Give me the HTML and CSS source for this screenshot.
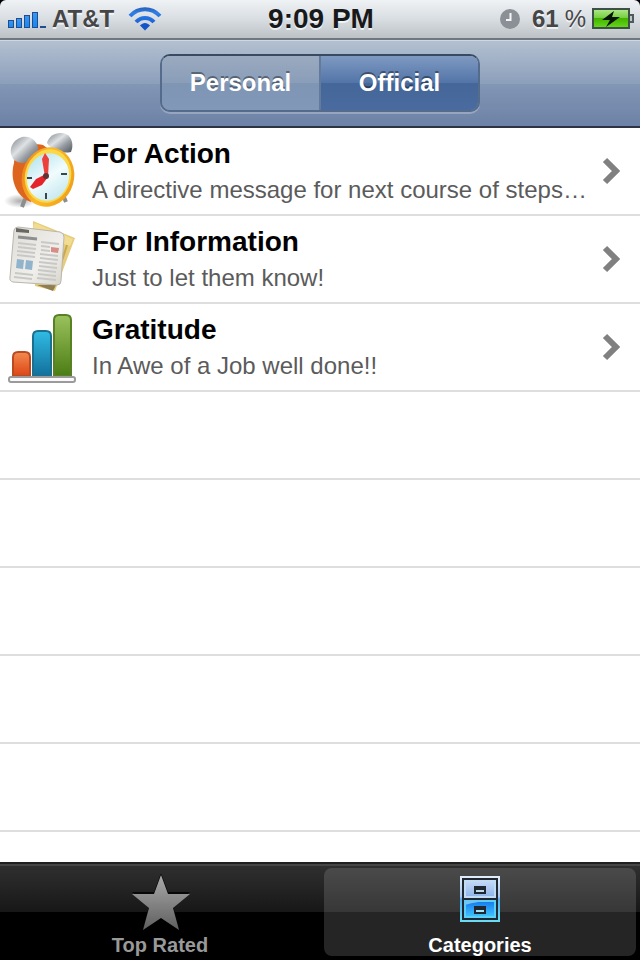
FILE: index.html
```html
<!DOCTYPE html>
<html lang="en">
  <head>
    <meta charset="UTF-8" />
    <meta name="viewport" content="width=device-width" />
    <title>Categories</title>
    <link rel="stylesheet" href="styles.css">
  </head>
  <body>
    <header class="status-bar">
      <div class="status-left">
        <svg class="signal" width="40" height="20" viewBox="0 0 40 20" aria-hidden="true">
          <defs>
            <linearGradient id="signalFill" x1="0" y1="0" x2="0" y2="1">
              <stop offset="0" stop-color="#3a97ee" />
              <stop offset="1" stop-color="#1487f5" />
            </linearGradient>
          </defs>
          <g fill="url(#signalFill)" stroke="#234c8e" stroke-width="1">
            <rect x="0.5" y="10.5" width="5" height="7" />
            <rect x="8.5" y="8.5" width="5" height="9" />
            <rect x="16.5" y="5.5" width="5" height="12" />
            <rect x="24.5" y="2.5" width="5" height="15" />
          </g>
          <rect x="32" y="16" width="6" height="2" fill="#234c8e" />
        </svg>
        <span class="carrier">AT&amp;T</span>
        <svg class="wifi" width="34" height="26" viewBox="0 0 34 26" aria-hidden="true">
          <defs>
            <linearGradient id="wifiStroke" gradientUnits="userSpaceOnUse" x1="0" y1="1" x2="0" y2="24">
              <stop offset="0" stop-color="#285caf" />
              <stop offset="0.25" stop-color="#2d80e8" />
              <stop offset="1" stop-color="#104fc8" />
            </linearGradient>
          </defs>
          <g fill="none" stroke="url(#wifiStroke)" stroke-width="4">
            <path d="M2 10C10.5 1 23.5 1 32 10" />
            <path d="M8 16C13 10.5 21 10.5 26 16" />
          </g>
          <path d="M12 19.5C15 16 19 16 22 19.5L17 24.5Z" fill="#1453c9" />
        </svg>
      </div>
      <time class="clock">9:09 PM</time>
      <div class="status-right">
        <svg width="20" height="20" viewBox="0 0 20 20" aria-hidden="true">
          <circle cx="10" cy="10" r="10" fill="#8a9095" />
          <path d="M10.5 4V11H6" fill="none" stroke="#f3f5f6" stroke-width="2" />
        </svg>
        <span class="percent">61<span class="percent-sign">%</span></span>
        <svg class="battery" width="42" height="22" viewBox="0 0 42 22" aria-hidden="true">
          <defs>
            <linearGradient id="batteryFill" x1="0" y1="0" x2="0" y2="1">
              <stop offset="0" stop-color="#b2e88d" />
              <stop offset="0.45" stop-color="#78cf43" />
              <stop offset="0.5" stop-color="#43b300" />
              <stop offset="1" stop-color="#68d81e" />
            </linearGradient>
          </defs>
          <rect x="1" y="1" width="36" height="19" fill="url(#batteryFill)" stroke="#3c5145" stroke-width="2" />
          <path d="M38 7h3v7h-3" fill="#bdc6ca" stroke="#50595e" stroke-width="2" />
          <path d="M22 3L10 12L18 12L14 19L28 9L20 9Z" fill="#071303" />
        </svg>
      </div>
    </header>

    <nav class="nav-bar">
      <div class="segmented">
        <button type="button" class="segment" aria-pressed="false">Personal</button>
        <button type="button" class="segment active" aria-pressed="true">Official</button>
      </div>
    </nav>

    <main class="content">
      <ul class="list">
        <li>
          <a class="row" href="#action">
            <svg class="row-icon" width="76" height="80" viewBox="0 0 76 80" aria-hidden="true">
              <defs>
                <linearGradient id="bell" x1="0" y1="0" x2="1" y2="1">
                  <stop offset="0" stop-color="#7b8187" />
                  <stop offset="0.4" stop-color="#dfe2e4" />
                  <stop offset="0.65" stop-color="#969ca1" />
                  <stop offset="1" stop-color="#4f555c" />
                </linearGradient>
                <linearGradient id="clockRim" x1="0" y1="0" x2="1" y2="0">
                  <stop offset="0" stop-color="#f08a1c" />
                  <stop offset="0.4" stop-color="#fbb92a" />
                  <stop offset="1" stop-color="#f0a21c" />
                </linearGradient>
                <linearGradient id="clockFace" x1="0" y1="0" x2="1" y2="1">
                  <stop offset="0" stop-color="#a9dfec" />
                  <stop offset="0.5" stop-color="#f1fcfd" />
                  <stop offset="1" stop-color="#b9e2ec" />
                </linearGradient>
                <radialGradient id="clockShadow">
                  <stop offset="0" stop-color="#777" stop-opacity="0.6" />
                  <stop offset="1" stop-color="#777" stop-opacity="0" />
                </radialGradient>
              </defs>
              <ellipse cx="20" cy="70" rx="16" ry="7" fill="url(#clockShadow)" />
              <path d="M25 68L22 76M63 64L66 71" stroke="#8c8d8f" stroke-width="4" />
              <path d="M14 32C15 19 32 11 43 14L54 22L31 71C18 67 9 50 14 32Z" fill="#de651d" />
              <path d="M14 29C7 20 12 9 22 6C31 4 39 11 38 20C33 30 23 36 14 29Z" fill="url(#bell)" />
              <path d="M47 12C49 3 59 0 66 3C72 6 74 14 71 21C62 23 52 20 47 12Z" fill="url(#bell)" />
              <ellipse cx="48" cy="46" rx="26" ry="30" fill="url(#clockRim)" transform="rotate(16 48 46)" />
              <ellipse cx="48" cy="45" rx="23" ry="27" fill="#fbd847" transform="rotate(16 48 45)" />
              <ellipse cx="48" cy="46" rx="21" ry="24" fill="url(#clockFace)" transform="rotate(16 48 46)" />
              <path d="M27 47h5M61 43h6M46 62v6" stroke="#38464d" stroke-width="2" />
              <path d="M45 46L42 28L45 22L49 28L48 45Z" fill="#ee403b" />
              <path d="M46 43L36 48L30 56L33 58L42 54L48 46Z" fill="#e5242a" />
              <circle cx="46" cy="45" r="3" fill="#613235" />
            </svg>
            <span class="row-text">
              <span class="row-title">For Action</span>
              <span class="row-detail">A directive message for next course of steps…</span>
            </span>
            <svg class="chevron" width="18" height="28" viewBox="0 0 18 28" aria-hidden="true">
              <path d="M3 3L14 14L3 25" />
            </svg>
          </a>
        </li>
        <li>
          <a class="row" href="#information">
            <svg class="row-icon" width="76" height="80" viewBox="0 0 76 80" aria-hidden="true">
              <defs>
                <linearGradient id="paper" x1="0" y1="0" x2="1" y2="1">
                  <stop offset="0" stop-color="#dedcd6" />
                  <stop offset="0.6" stop-color="#f0efeb" />
                  <stop offset="1" stop-color="#d6d3ca" />
                </linearGradient>
              </defs>
              <path d="M33 2L75 19L55 72L35 67Z" fill="#e6cc7b" />
              <path d="M35 4L73 20L70 27L31 13Z" fill="#f1dc91" />
              <path d="M37 66L53 72L56 66Z" fill="#8e7e52" />
              <path d="M67 26L60 48" stroke="#c7a850" stroke-width="2" />
              <path d="M18 8L60 13Q64 14 64 18L61 62Q61 66 57 66L13 63Q9 62 10 58L14 11Q15 8 18 8Z" fill="url(#paper)" stroke="#b9b6ae" />
              <path d="M16 9L29 11V14L16 13Z" fill="#696761" />
              <path d="M18 18L37 20" stroke="#8d8e8e" stroke-width="3" />
              <path d="M41 23L59 25M41 27L50 28M41 31L50 32M40 35L58 37M40 39L58 41M39 43L57 45M39 47L57 49M38 51L56 53M38 55L56 57M37 59L56 61M18 24L36 26M18 28L36 30M17 32L35 34M17 36L35 38M15 54L33 56M14 58L32 60" stroke="#c8c9c7" stroke-width="2" />
              <path d="M51 28L59 29L58 34L51 33Z" fill="#d88c88" />
              <path d="M17 40L24 41L23 50L16 49ZM26 41L33 42L32 51L25 50Z" fill="#91b3cc" />
            </svg>
            <span class="row-text">
              <span class="row-title">For Information</span>
              <span class="row-detail">Just to let them know!</span>
            </span>
            <svg class="chevron" width="18" height="28" viewBox="0 0 18 28" aria-hidden="true">
              <path d="M3 3L14 14L3 25" />
            </svg>
          </a>
        </li>
        <li>
          <a class="row" href="#gratitude">
            <svg class="row-icon" width="76" height="80" viewBox="0 0 76 80" aria-hidden="true">
              <defs>
                <linearGradient id="barRed" x1="0" y1="0" x2="0" y2="1">
                  <stop offset="0" stop-color="#f38b4e" />
                  <stop offset="1" stop-color="#dd4516" />
                </linearGradient>
                <linearGradient id="barBlue" x1="0" y1="0" x2="0" y2="1">
                  <stop offset="0" stop-color="#30bce4" />
                  <stop offset="1" stop-color="#126f9b" />
                </linearGradient>
                <linearGradient id="barGreen" x1="0" y1="0" x2="0" y2="1">
                  <stop offset="0" stop-color="#9bc25d" />
                  <stop offset="1" stop-color="#4b7c14" />
                </linearGradient>
              </defs>
              <path d="M13 69V50Q13 45 18 45H25Q30 45 30 50V69Z" fill="url(#barRed)" stroke="#b94b22" stroke-width="2" />
              <path d="M33 69V29Q33 24 38 24H46Q51 24 51 29V69Z" fill="url(#barBlue)" stroke="#1b708f" stroke-width="2" />
              <path d="M54 69V13Q54 8 59 8H66Q71 8 71 13V69Z" fill="url(#barGreen)" stroke="#588126" stroke-width="2" />
              <rect x="9" y="70" width="66" height="5" rx="2" fill="#fafafa" stroke="#9b9b9b" stroke-width="2" />
            </svg>
            <span class="row-text">
              <span class="row-title">Gratitude</span>
              <span class="row-detail">In Awe of a Job well done!!</span>
            </span>
            <svg class="chevron" width="18" height="28" viewBox="0 0 18 28" aria-hidden="true">
              <path d="M3 3L14 14L3 25" />
            </svg>
          </a>
        </li>
      </ul>
      <div class="empty-rows"></div>
    </main>

    <nav class="tab-bar">
      <a class="tab" href="#top-rated">
        <svg class="tab-icon" width="60" height="58" viewBox="0 0 60 58" aria-hidden="true">
          <defs>
            <linearGradient id="starFill" x1="0" y1="0" x2="0" y2="1">
              <stop offset="0" stop-color="#aaa" />
              <stop offset="1" stop-color="#5f5f5f" />
            </linearGradient>
          </defs>
          <path d="M31 -1L38 18H60L43 32L49 54L31 42L13 54L19 32L2 18H24Z" fill="#080808" />
          <path d="M31 1L38 20H60L43 34L49 56L31 44L13 56L19 34L2 20H24Z" fill="url(#starFill)" />
        </svg>
        <span class="tab-label">Top Rated</span>
      </a>
      <a class="tab active" href="#categories" aria-current="page">
        <svg class="tab-icon" width="60" height="58" viewBox="0 0 60 58" aria-hidden="true">
          <defs>
            <linearGradient id="cabinetEdge" x1="0" y1="0" x2="0" y2="1">
              <stop offset="0" stop-color="#e0ebfa" />
              <stop offset="0.45" stop-color="#a4c8ee" />
              <stop offset="0.5" stop-color="#50b2f5" />
              <stop offset="1" stop-color="#69dcf7" />
            </linearGradient>
            <linearGradient id="drawerTop" x1="0" y1="0" x2="0" y2="1">
              <stop offset="0" stop-color="#c6d8f7" />
              <stop offset="1" stop-color="#8db5e9" />
            </linearGradient>
            <linearGradient id="drawerBottom" x1="0" y1="0" x2="0" y2="1">
              <stop offset="0" stop-color="#1679e8" />
              <stop offset="0.3" stop-color="#2290f3" />
              <stop offset="1" stop-color="#41c4fa" />
            </linearGradient>
          </defs>
          <rect x="11" y="3" width="38" height="44" fill="#202730" stroke="url(#cabinetEdge)" stroke-width="2" />
          <rect x="15" y="7" width="30" height="16" fill="url(#drawerTop)" stroke="#c0dcf4" stroke-width="2" />
          <rect x="15" y="27" width="30" height="16" fill="url(#drawerBottom)" stroke="#5bd0f6" stroke-width="2" />
          <path d="M15 31Q27 27 44 27H15Z" fill="#79c2f4" />
          <rect x="25" y="13" width="10" height="6" fill="#b9dced" stroke="#20272f" stroke-width="2" />
          <rect x="25" y="33" width="10" height="6" fill="#9be4fa" stroke="#20272f" stroke-width="2" />
          <path d="M25 15h10M25 35h10" stroke="#20272f" stroke-width="2" />
        </svg>
        <span class="tab-label">Categories</span>
      </a>
    </nav>
  </body>
</html>
```

FILE: styles.css
```css
* {
  box-sizing: border-box;
}

body {
  margin: 0;
  min-height: 100vh;
  display: flex;
  flex-direction: column;
  font-family: "Liberation Sans", Arial, Helvetica, sans-serif;
  background-color: #000;
}

a {
  color: inherit;
  text-decoration: none;
}

.status-bar {
  height: 40px;
  display: grid;
  grid-template-columns: 1fr auto 1fr;
  align-items: center;
  padding: 0 6px 0 8px;
  background: linear-gradient(#eff2f5, #d9dee2 50%, #bbc1c5);
  border-bottom: 2px solid #70777e;
  border-radius: 6px 6px 0 0;
  color: #454648;
  font-size: 24px;
  font-weight: bold;
  text-shadow: 0 2px 0 rgba(255, 255, 255, 0.7);
}

.status-left,
.status-right {
  display: flex;
  align-items: center;
}

.status-right {
  justify-content: flex-end;
}

.signal {
  margin-top: 2px;
}

.carrier {
  margin: 0 14px 0 4px;
}

.clock {
  color: #18191b;
  font-size: 28px;
}

.percent {
  margin: 0 6px 0 12px;
}

.percent-sign {
  margin-left: 6px;
  font-weight: normal;
}

.nav-bar {
  height: 88px;
  display: flex;
  justify-content: center;
  padding-top: 13px;
  background: linear-gradient(#b3c0d0, #8c9fbb 50%, #8296b5 51%, #6c82a6);
  border-top: 1px solid #ced7e2;
  border-bottom: 2px solid #2c3443;
}

.segmented {
  width: 50%;
  height: 58px;
  display: flex;
  overflow: hidden;
  border: 2px solid #556b8c;
  border-top-color: #3a4a62;
  border-radius: 10px;
  box-shadow: 0 2px 0 rgba(255, 255, 255, 0.25);
}

.segment {
  flex: 1;
  padding: 0;
  border: none;
  background: linear-gradient(#9aaabf, #8a9db9 50%, #7f95b4 51%, #8198b9);
  color: #fff;
  font-family: inherit;
  font-size: 24px;
  font-weight: bold;
  text-shadow: 0 -2px 0 rgba(0, 0, 0, 0.4);
  cursor: pointer;
}

.segment.active {
  border-left: 2px solid #647a9b;
  background: linear-gradient(#7f9ac1, #5274a8 50%, #446698 51%, #496b9f);
}

.content {
  flex: 1;
  display: flex;
  flex-direction: column;
  background-color: #fff;
}

.list {
  margin: 0;
  padding: 0;
  list-style: none;
}

.row {
  height: 88px;
  display: flex;
  align-items: center;
  padding-right: 20px;
  border-bottom: 2px solid #dedede;
}

.row-icon {
  flex: none;
  margin-right: 16px;
}

.row-text {
  flex: 1;
  min-width: 0;
  display: flex;
  flex-direction: column;
  gap: 2px;
}

.row-title {
  color: #000;
  font-size: 28px;
  font-weight: bold;
  line-height: 36px;
}

.row-detail {
  overflow: hidden;
  color: #5b5b5b;
  font-size: 24px;
  line-height: 32px;
  text-overflow: ellipsis;
  white-space: nowrap;
}

.chevron {
  flex: none;
  margin-left: 4px;
  fill: none;
  stroke: #808080;
  stroke-width: 6px;
}

/* separators carry on below the last category */
.empty-rows {
  flex: 1;
  background: repeating-linear-gradient(#fff 0 86px, #dedede 86px 88px);
}

.tab-bar {
  height: 98px;
  display: flex;
  padding: 4px 0;
  background: linear-gradient(#303030, #171717 48px, #000 48px);
  border-top: 2px solid #202020;
  box-shadow: inset 0 2px 0 #454545;
}

.tab {
  flex: 1;
  display: flex;
  flex-direction: column;
  align-items: center;
  margin: 0 4px;
  padding-top: 6px;
  border-radius: 8px;
  color: #999;
}

.tab.active {
  background: linear-gradient(#4a4a4a, #373737 44px, #252525 44px);
  color: #fff;
}

.tab-icon {
  flex: none;
}

.tab-label {
  font-size: 20px;
  font-weight: bold;
  line-height: 26px;
}
```
